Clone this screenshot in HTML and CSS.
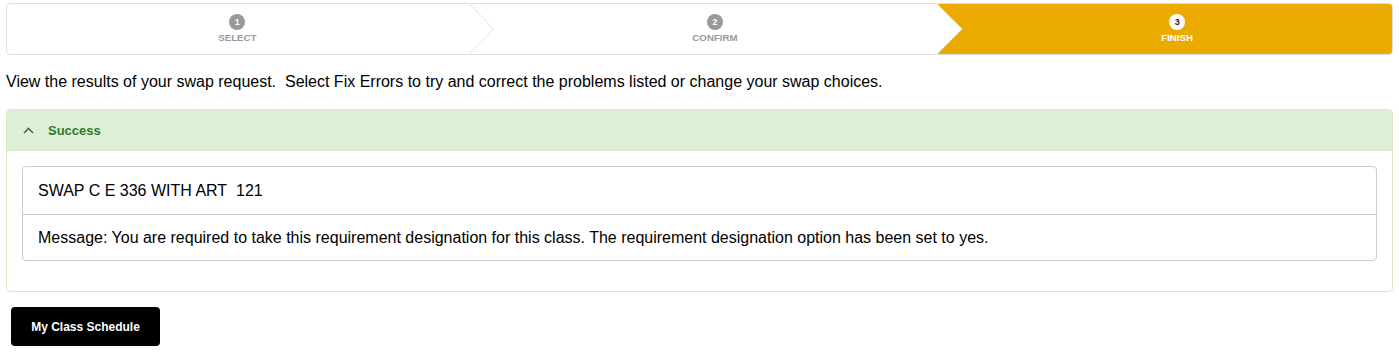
FILE: index.html
```html
<!DOCTYPE html>
<html lang="en">
<head>
<meta charset="utf-8">
<title>Swap Results</title>
<link rel="stylesheet" href="styles.css">
</head>
<body>
<div class="steps">
  <div class="step step-first">
    <span class="step-num">1</span>
    <span class="step-label">SELECT</span>
    <svg class="chev" width="27" height="52" viewBox="0 0 27 52"><polyline points="0.5,0 25.5,26 0.5,52" fill="none" stroke="#e3e3e3" stroke-width="1"/></svg>
  </div>
  <div class="step step-mid">
    <span class="step-num">2</span>
    <span class="step-label">CONFIRM</span>
  </div>
  <div class="step step-active">
    <span class="step-num">3</span>
    <span class="step-label">FINISH</span>
  </div>
</div>

<p class="intro">View the results of your swap request.&nbsp; Select Fix Errors to try and correct the problems listed or change your swap choices.</p>

<div class="panel">
  <div class="panel-head">
    <svg class="caret" width="11" height="7" viewBox="0 0 11 7"><polyline points="1,6 5.5,1.5 10,6" fill="none" stroke="#3c763d" stroke-width="1.6"/></svg>
    <span class="panel-title">Success</span>
  </div>
  <div class="panel-body">
    <ul class="result">
      <li class="result-row">SWAP C E 336 WITH ART&nbsp; 121</li>
      <li class="result-row">Message: You are required to take this requirement designation for this class. The requirement designation option has been set to yes.</li>
    </ul>
  </div>
</div>

<div class="actions">
  <button class="btn">My Class Schedule</button>
</div>
</body>
</html>
```

FILE: styles.css
```css
* { box-sizing: border-box; }

body {
  margin: 0;
  padding: 3px 6px 0 6px;
  font-family: "Liberation Sans", Arial, sans-serif;
  color: #000;
  background: #fff;
}

.steps {
  display: flex;
  height: 52px;
  border: 1px solid #e0e0e0;
  border-radius: 4px;
  overflow: hidden;
}

.step {
  position: relative;
  display: flex;
  flex-direction: column;
  align-items: center;
  justify-content: center;
  padding-bottom: 2px;
}

.step-first { flex: 0 0 33.26%; }
.step-mid { flex: 0 0 33.91%; padding-left: 25px; }
.step-active { flex: 1 1 0; padding-left: 25px; }

.chev {
  position: absolute;
  left: 100%;
  top: -1px;
  z-index: 2;
}

.step-active {
  background: #ebaa00;
  clip-path: polygon(0 0, 100% 0, 100% 100%, 0 100%, 25px 50%);
}

.step-num {
  width: 16px;
  height: 16px;
  border-radius: 50%;
  background: #999;
  color: #fff;
  font-size: 9px;
  font-weight: bold;
  line-height: 16px;
  text-align: center;
}

.step-label {
  margin-top: 2px;
  font-size: 9.7px;
  font-weight: bold;
  color: #999;
}

.step-active .step-num {
  background: #fff;
  color: #222;
}

.step-active .step-label { color: #fff; }

.intro {
  margin: 17px 0 17px 0;
  font-size: 16px;
  line-height: 20px;
}

.panel {
  border: 1px solid #d6e9c6;
  border-radius: 4px;
}

.panel-head {
  display: flex;
  align-items: center;
  height: 41px;
  background: #dff0d8;
  border-bottom: 1px solid #d6e9c6;
  padding-left: 16px;
}

.caret { margin-right: 14px; margin-top: 1px; }

.panel-title {
  font-size: 13px;
  font-weight: bold;
  color: #2e7a2e;
}

.panel-body {
  padding: 15px 15px 30px 15px;
}

.result {
  list-style: none;
  margin: 0;
  padding: 0;
  border: 1px solid #ccc;
  border-radius: 4px;
}

.result-row {
  height: 47px;
  display: flex;
  align-items: center;
  padding: 0 15px;
  font-size: 16px;
}

.result-row + .result-row { border-top: 1px solid #ccc; height: 46px; }

.actions {
  padding: 15px 0 0 5px;
}

.btn {
  width: 149px;
  height: 39px;
  background: #000;
  color: #fff;
  border: none;
  border-radius: 4px;
  font-family: "Liberation Sans", Arial, sans-serif;
  font-size: 12px;
  font-weight: bold;
}
```
